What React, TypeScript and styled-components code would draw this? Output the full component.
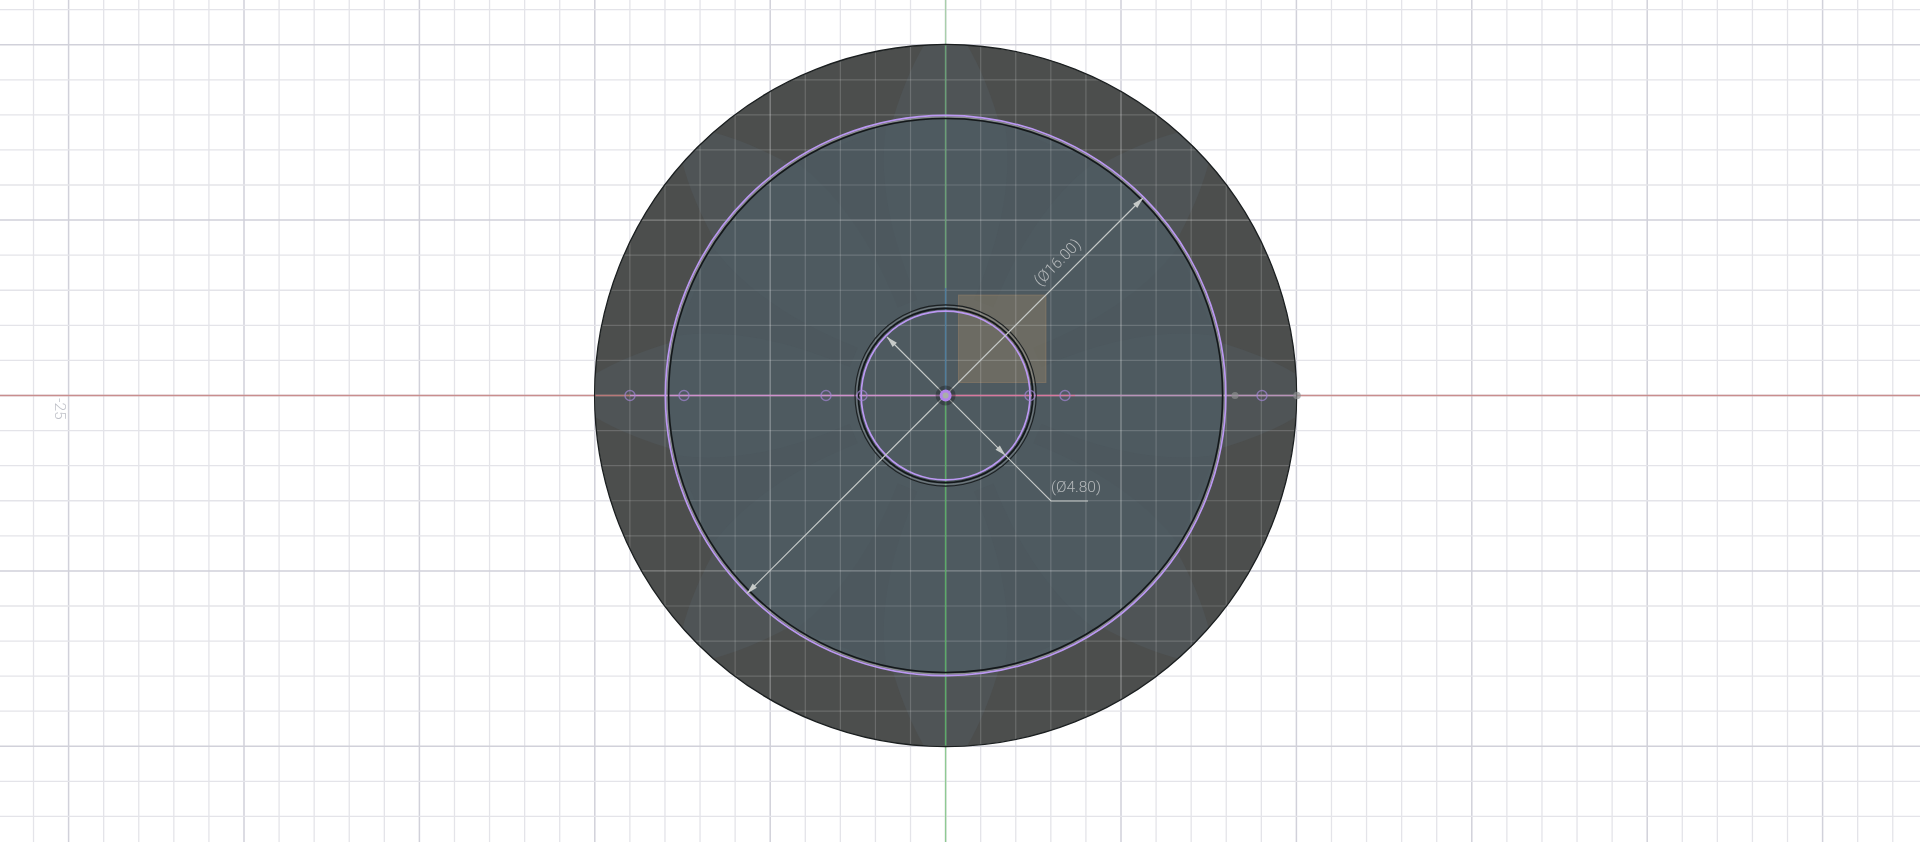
import styled, { createGlobalStyle } from 'styled-components'

const CX = 945.6
const CY = 395.5
const UNIT = 35.08

const GlobalStyle = createGlobalStyle`
  html, body {
    margin: 0;
    height: 100%;
    background: #fff;
    overflow: hidden;
  }
  #root {
    height: 100%;
  }
`

const Viewport = styled.main`
  width: 100%;
  height: 100%;
  background: #ffffff;
`

const Sketch = styled.svg`
  display: block;
  width: 100%;
  height: 100%;
  filter: blur(0.25px);
`

const PaperLine = styled.line<{ $major: boolean }>`
  stroke: ${p => (p.$major ? '#d1d1da' : '#e4e4e9')};
  stroke-width: ${p => (p.$major ? 1.5 : 1.3)};
`

const BodyLine = styled.line<{ $major: boolean }>`
  stroke: #ffffff;
  stroke-opacity: ${p => (p.$major ? 0.3 : 0.17)};
  stroke-width: ${p => (p.$major ? 1.4 : 1.2)};
`

const Disc = styled.circle<{ $fill: string }>`
  fill: ${p => p.$fill};
`

const Lobe = styled.path<{ $fill: string }>`
  fill: ${p => p.$fill};
`

const Ring = styled.circle<{ $color: string; $width: number }>`
  fill: none;
  stroke: ${p => p.$color};
  stroke-width: ${p => p.$width};
`

const OriginPlane = styled.rect`
  fill: rgba(178, 150, 107, 0.3);
  stroke: rgba(190, 150, 110, 0.3);
  stroke-width: 1;
`

const Axis = styled.line<{ $color: string; $width?: number }>`
  stroke: ${p => p.$color};
  stroke-width: ${p => p.$width ?? 1.4};
`

const DimLine = styled.path`
  fill: none;
  stroke: #c6cac8;
  stroke-width: 1.2;
`

const Arrow = styled.path`
  fill: #c6cac8;
`

const DimText = styled.text`
  font-family: Roboto, 'Liberation Sans', Arial, sans-serif;
  font-weight: 300;
  font-size: 15.5px;
  fill: #b4b8ba;
`

const ScaleText = styled.text`
  font-family: Roboto, 'Liberation Sans', Arial, sans-serif;
  font-weight: 300;
  font-size: 15.5px;
  fill: #bfc1c8;
`

const SketchPoint = styled.circle`
  fill: none;
  stroke: #a184d2;
  stroke-opacity: 0.7;
  stroke-width: 1.4;
`

const GreyPoint = styled.circle`
  fill: #8b8f8f;
  fill-opacity: 0.7;
`

const polar = (deg: number, r: number) => {
  const a = (deg * Math.PI) / 180
  return `${(CX + r * Math.cos(a)).toFixed(1)} ${(CY + r * Math.sin(a)).toFixed(1)}`
}

const lobePath = (deg: number, r0: number, r1: number, base: number, tip: number, bend: number) =>
  `M${polar(deg - base, r0)} Q${polar(deg - base * bend, r0 + (r1 - r0) * 0.6)} ${polar(deg - tip, r1)}` +
  ` L${polar(deg + tip, r1)} Q${polar(deg + base * bend, r0 + (r1 - r0) * 0.6)} ${polar(deg + base, r0)} Z`

const arrowPath = (x: number, y: number, deg: number) => {
  const a = (deg * Math.PI) / 180
  const bx = x - 11 * Math.cos(a)
  const by = y - 11 * Math.sin(a)
  const nx = -Math.sin(a) * 3
  const ny = Math.cos(a) * 3
  return `M${x} ${y} L${bx + nx} ${by + ny} L${bx - nx} ${by - ny} Z`
}

const xSteps = Array.from({ length: 56 }, (_, i) => i - 27)
const ySteps = Array.from({ length: 25 }, (_, i) => i - 12)
const lobeAngles = [0, 45, 90, 135, 180, 225, 270, 315]
const hollowPoints = [630, 684, 826, 862, 1030, 1065, 1262]

const Grid = ({ Line }: { Line: typeof PaperLine }) => (
  <g>
    {xSteps.map(k => {
      const x = CX + k * UNIT
      return <Line key={`v${k}`} $major={k % 5 === 0} x1={x} x2={x} y1={0} y2={842} />
    })}
    {ySteps.map(k => {
      const y = CY + k * UNIT
      return <Line key={`h${k}`} $major={k % 5 === 0} x1={0} x2={1920} y1={y} y2={y} />
    })}
  </g>
)

export default function App() {
  return (
    <>
      <GlobalStyle />
      <Viewport>
        <Sketch viewBox="0 0 1920 842" preserveAspectRatio="none">
          <defs>
            <clipPath id="body-clip">
              <circle cx={CX} cy={CY} r={351} />
            </clipPath>
          </defs>

          <Grid Line={PaperLine} />

          {/* body with its faint shaded facets */}
          <Disc $fill="#4c4e4d" cx={CX} cy={CY} r={351} />
          <g clipPath="url(#body-clip)">
            {lobeAngles.map(a => (
              <Lobe key={a} $fill="#4f5456" d={lobePath(a, 270, 354, 12, 3.2, 0.62)} />
            ))}
          </g>
          <Disc $fill="#4e5a60" cx={CX} cy={CY} r={278} />
          {lobeAngles.map(a => (
            <Lobe key={a} $fill="#4d585e" d={lobePath(a + 22.5, 100, 276, 6, 10, 0.4)} />
          ))}

          <OriginPlane x={958.5} y={295} width={87.5} height={87.5} />

          <g clipPath="url(#body-clip)">
            <Grid Line={BodyLine} />
          </g>

          <Axis $color="#a9cfab" x1={CX} x2={CX} y1={0} y2={44} />
          <Axis $color="#6a9f76" x1={CX} x2={CX} y1={44} y2={288} />
          <Axis $color="#4f7d9c" x1={CX} x2={CX} y1={288} y2={390} />
          <Axis $color="#5cab68" x1={CX} x2={CX} y1={400} y2={746} />
          <Axis $color="#8fca93" x1={CX} x2={CX} y1={746} y2={842} />

          <Axis $color="#c98e8e" x1={0} x2={595} y1={CY} y2={CY} />
          <Axis $color="#b87878" x1={595} x2={630} y1={CY} y2={CY} />
          <Axis $color="#cf90cc" $width={1.7} x1={630} x2={CX} y1={CY} y2={CY} />
          <Axis $color="#d8789e" $width={1.7} x1={CX} x2={1075} y1={CY} y2={CY} />
          <Axis $color="#b893b8" $width={1.6} x1={1075} x2={1297} y1={CY} y2={CY} />
          <Axis $color="#c98e8e" x1={1297} x2={1920} y1={CY} y2={CY} />

          <Ring $color="#1b1f20" $width={1.3} cx={CX} cy={CY} r={351} />
          <Ring $color="rgba(215,215,215,0.45)" $width={1.2} cx={CX} cy={CY} r={278.7} />
          <Ring $color="#14181a" $width={1.6} cx={CX} cy={CY} r={277} />
          <Ring $color="#bb98f2" $width={1.7} cx={CX} cy={CY} r={280.2} />

          <Ring $color="#1c2022" $width={1.1} cx={CX} cy={CY} r={90.6} />
          <Ring $color="rgba(205,205,205,0.3)" $width={1} cx={CX} cy={CY} r={89} />
          <Ring $color="#14181a" $width={1.7} cx={CX} cy={CY} r={87.2} />
          <Ring $color="#bb98f2" $width={1.7} cx={CX} cy={CY} r={84.4} />

          <DimLine d="M747 593.5 L1143 198" />
          <Arrow d={arrowPath(1143, 198, -45)} />
          <Arrow d={arrowPath(747, 593.5, 135)} />
          <DimLine d="M887 337 L1051 501 H1088" />
          <Arrow d={arrowPath(887, 337, 225)} />
          <Arrow d={arrowPath(1005.5, 455.5, 45)} />

          {hollowPoints.map(x => (
            <SketchPoint key={x} cx={x} cy={CY} r={5} />
          ))}
          <GreyPoint cx={1235} cy={CY} r={3.5} />
          <GreyPoint cx={1297} cy={CY} r={3.8} />

          <Disc $fill="rgba(20,24,26,0.35)" cx={CX} cy={CY} r={10} />
          <Disc $fill="#b285ea" cx={CX} cy={CY} r={6} />
          <Disc $fill="#a9b0a8" cx={CX} cy={CY} r={3} />

          <DimText textAnchor="middle" transform="translate(1061 266) rotate(-45)">
            (Ø16.00)
          </DimText>
          <DimText x={1051} y={492}>
            (Ø4.80)
          </DimText>
          <ScaleText transform="translate(55 398) rotate(90)">-25</ScaleText>
        </Sketch>
      </Viewport>
    </>
  )
}
